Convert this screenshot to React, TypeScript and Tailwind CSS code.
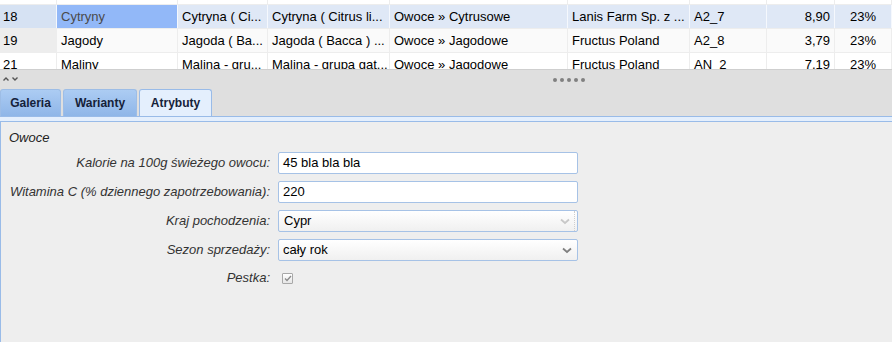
import React from "react";

const cols = [57, 121, 90, 122, 178, 122, 77, 68, 57];

type Row = { n: string; cells: string[]; selected?: boolean; alt?: boolean };

const rows: Row[] = [
  { n: "", cells: ["", "", "", "", "", "", "", ""] },
  {
    n: "18",
    cells: ["Cytryny", "Cytryna ( Ci...", "Cytryna ( Citrus li...", "Owoce » Cytrusowe", "Lanis Farm Sp. z ...", "A2_7", "8,90", "23%"],
    selected: true,
  },
  {
    n: "19",
    cells: ["Jagody", "Jagoda ( Ba...", "Jagoda ( Bacca ) ...", "Owoce » Jagodowe", "Fructus Poland", "A2_8", "3,79", "23%"],
    alt: true,
  },
  {
    n: "21",
    cells: ["Maliny", "Malina - gru...", "Malina - grupa gat...", "Owoce » Jagodowe", "Fructus Poland", "AN_2", "7,19", "23%"],
  },
];

function GridRow({ row }: { row: Row }) {
  const rowBg = row.selected ? "bg-[#dfe8f6]" : row.alt ? "bg-[#fafafa]" : "bg-white";
  const numBg = row.selected ? "bg-[#d6e2f3]" : row.alt ? "bg-[#ededed]" : "bg-white";
  const line = row.selected ? "border-[#f5f8fd]" : "border-[#ededed]";
  return (
    <div className={`flex h-[24px] border-b border-[#ededed] ${rowBg}`}>
      <div
        className={`shrink-0 border-r ${line} ${numBg} px-[3px] leading-[23px]`}
        style={{ width: cols[0] }}
      >
        {row.n}
      </div>
      {row.cells.map((c, i) => {
        const sel = row.selected && i === 0;
        const align = i === 6 ? "text-right" : i === 7 ? "text-center" : "text-left";
        return (
          <div
            key={i}
            className={`shrink-0 overflow-hidden whitespace-nowrap border-r ${line} px-[4px] leading-[23px] ${align} ${
              sel ? "bg-[#92b8f8] text-[#4a4a4a]" : ""
            }`}
            style={{ width: cols[i + 1] }}
          >
            {c}
          </div>
        );
      })}
    </div>
  );
}

function Tab({ label, active }: { label: string; active?: boolean }) {
  return (
    <div
      className={`flex h-[27px] items-center justify-center rounded-t-[3px] border border-b-0 text-[12px] font-bold text-[#15223a] ${
        active
          ? "border-[#99bbe8] bg-[#e4effd]"
          : "border-[#9dbde6] bg-gradient-to-b from-[#acccf3] to-[#8fb6e8]"
      }`}
    >
      {label}
    </div>
  );
}

function Field({ label, children }: { label: string; children: React.ReactNode }) {
  return (
    <div className="flex h-[22px] items-center">
      <div className="w-[261px] shrink-0 whitespace-nowrap text-right text-[13px] italic text-[#333]">{label}</div>
      <div className="ml-[8px] w-[300px]">{children}</div>
    </div>
  );
}

function Chevron({ light }: { light?: boolean }) {
  return (
    <svg width="10" height="7" viewBox="0 0 10 7">
      <path d="M1 1.5 L5 5 L9 1.5" fill="none" stroke={light ? "#c8c8c8" : "#808080"} strokeWidth="1.8" />
    </svg>
  );
}

export default function App() {
  return (
    <div
      className="flex h-[342px] w-[892px] flex-col overflow-hidden bg-[#eeeeee] text-[13px] text-black"
      style={{ fontFamily: '"Liberation Sans", Arial, sans-serif' }}
    >
      {/* grid */}
      <div className="h-[69px] shrink-0 overflow-hidden bg-white">
        <div className="-mt-[19px]">
          {rows.map((r, i) => (
            <GridRow key={i} row={r} />
          ))}
        </div>
      </div>

      {/* splitter */}
      <div className="flex h-[20px] shrink-0 items-center border-t border-[#cfcfcf] bg-[#dfdfdf] pb-[2px]">
        <div className="flex w-[40px] items-center gap-[3px] pl-[3px]">
          <svg width="6" height="4" viewBox="0 0 6 4">
            <path d="M0.5 3.5 L3 1 L5.5 3.5" fill="none" stroke="#555" strokeWidth="1.4" />
          </svg>
          <svg width="6" height="4" viewBox="0 0 6 4">
            <path d="M0.5 0.5 L3 3 L5.5 0.5" fill="none" stroke="#555" strokeWidth="1.4" />
          </svg>
        </div>
        <div className="flex flex-1 justify-center gap-[3px] pl-[206px] pt-[3px]">
          {[0, 1, 2, 3, 4].map((d) => (
            <div key={d} className="h-[4px] w-[4px] rounded-full bg-[#808080]" />
          ))}
        </div>
      </div>

      {/* tab strip */}
      <div className="flex h-[28px] shrink-0 items-end gap-[2px] border-b border-[#99bbe8] bg-[#dfdfdf]">
        <div className="w-[61px]">
          <Tab label="Galeria" />
        </div>
        <div className="w-[74px]">
          <Tab label="Warianty" />
        </div>
        <div className="w-[73px]">
          <Tab label="Atrybuty" active />
        </div>
      </div>
      <div className="h-[4px] shrink-0 bg-[#e4effd]" />

      {/* panel */}
      <div className="flex-1 border-l border-t border-[#99bbe8] bg-[#eeeeee] pl-[8px] pt-[8px]">
        <div className="text-[13px] italic leading-[16px] text-[#222]">Owoce</div>
        <div className="mt-[6px] flex flex-col gap-[7px]">
          <Field label="Kalorie na 100g świeżego owocu:">
            <div className="flex h-[22px] items-center rounded-[2px] border border-[#a6c2e6] bg-white px-[4px] text-[13px]">
              45 bla bla bla
            </div>
          </Field>
          <Field label="Witamina C (% dziennego zapotrzebowania):">
            <div className="flex h-[22px] items-center rounded-[2px] border border-[#a6c2e6] bg-white px-[4px] text-[13px]">
              220
            </div>
          </Field>
          <Field label="Kraj pochodzenia:">
            <div className="flex h-[22px] items-center rounded-[2px] border border-[#a6c2e6] bg-gradient-to-b from-white to-[#f0f0f0] pl-[5px] text-[13px]">
              <span className="flex-1">Cypr</span>
              <span className="flex h-full items-center border-r border-dotted border-[#cfcfcf] pr-[4px]">
                <Chevron light />
              </span>
              <span className="w-[2px]" />
            </div>
          </Field>
          <Field label="Sezon sprzedaży:">
            <div className="flex h-[22px] items-center rounded-[2px] border border-[#a6c2e6] bg-gradient-to-b from-white to-[#f0f0f0] pl-[4px] text-[13px]">
              <span className="flex-1">cały rok</span>
              <span className="pr-[5px]">
                <Chevron />
              </span>
            </div>
          </Field>
          <div className="mt-[4px] flex h-[12px] items-center">
            <div className="w-[261px] shrink-0 text-right text-[13px] italic text-[#333]">Pestka:</div>
            <div className="ml-[12px] flex h-[11px] w-[11px] items-center justify-center rounded-[1px] border border-[#a8a8a8] bg-gradient-to-b from-white to-[#e6e6e6]">
              <svg width="8" height="7" viewBox="0 0 8 7">
                <path d="M1 3.5 L3 5.5 L7 1" fill="none" stroke="#8a8a8a" strokeWidth="1.3" />
              </svg>
            </div>
          </div>
        </div>
      </div>
    </div>
  );
}
